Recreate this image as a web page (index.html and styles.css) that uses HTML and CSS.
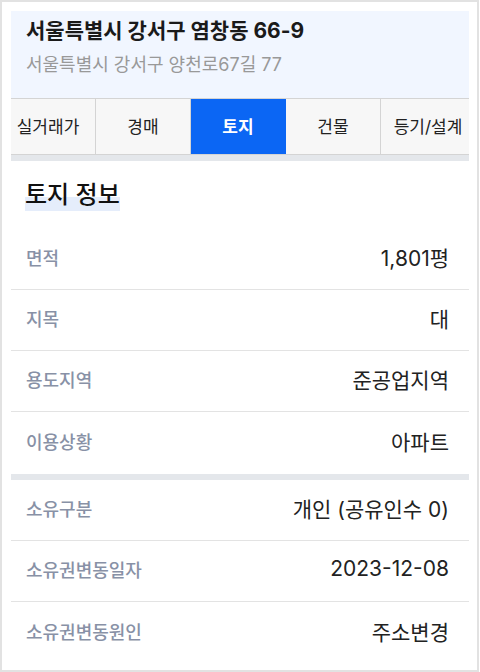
FILE: index.html
```html
<!DOCTYPE html>
<html lang="ko">
<head>
  <meta charset="UTF-8">
  <title>토지 정보</title>
  <link rel="stylesheet" href="styles.css">
</head>
<body>
  <div class="frame">
    <div class="card">
      <div class="header">
        <h1 class="address">서울특별시 강서구 염창동 66-9</h1>
        <p class="road-address">서울특별시 강서구 양천로67길 77</p>
      </div>

      <div class="tabs">
        <div class="tab-strip">
          <div class="tab">실거래가</div>
          <div class="tab">경매</div>
          <div class="tab active">토지</div>
          <div class="tab">건물</div>
          <div class="tab">등기/설계</div>
        </div>
      </div>

      <div class="divider"></div>

      <div class="section-head">
        <h2 class="section-title">토지 정보</h2>
      </div>

      <div class="row">
        <span class="label">면적</span>
        <span class="value">1,801평</span>
      </div>
      <div class="row">
        <span class="label">지목</span>
        <span class="value">대</span>
      </div>
      <div class="row">
        <span class="label">용도지역</span>
        <span class="value">준공업지역</span>
      </div>
      <div class="row last">
        <span class="label">이용상황</span>
        <span class="value">아파트</span>
      </div>

      <div class="divider"></div>

      <div class="row">
        <span class="label">소유구분</span>
        <span class="value">개인 (공유인수 0)</span>
      </div>
      <div class="row">
        <span class="label">소유권변동일자</span>
        <span class="value">2023-12-08</span>
      </div>
      <div class="row last">
        <span class="label">소유권변동원인</span>
        <span class="value">주소변경</span>
      </div>
    </div>
  </div>
</body>
</html>
```

FILE: styles.css
```css
* {
  box-sizing: border-box;
}
body {
  margin: 0;
  font-family: Inter, "Noto Sans CJK KR", sans-serif;
  color: #222;
  background-color: #fff;
}
.frame {
  width: 479px;
  height: 672px;
  border: 2px solid #e2e2e2;
  padding: 9px 7px 0 9px;
  overflow: hidden;
}
.card {
  width: 458px;
}
.header {
  background-color: #f1f6ff;
  height: 87px;
  padding: 7px 15px 0;
}
.address {
  margin: 0;
  font-size: 21px;
  font-weight: 700;
  line-height: 26px;
  color: #1a1a1a;
}
.road-address {
  margin: 8px 0 0;
  font-size: 18px;
  line-height: 26px;
  color: #999;
}
.tabs {
  overflow: hidden;
  border-top: 1px solid #d4d4d4;
  border-bottom: 1px solid #d4d4d4;
}
.tab-strip {
  display: flex;
  margin-left: -10px;
}
.tab {
  flex: 0 0 95px;
  height: 55px;
  display: flex;
  align-items: center;
  justify-content: center;
  padding-bottom: 2px;
  background-color: #f7f7f7;
  border-right: 1px solid #d4d4d4;
  font-size: 17px;
  color: #222;
}
.tab.active {
  background-color: #0b66f4;
  border-right-color: #0b66f4;
  color: #fff;
  font-weight: 700;
}
.divider {
  height: 6px;
  background-color: #e4e7eb;
}
.section-head {
  padding: 18px 14px 0;
  height: 68px;
}
.section-title {
  display: inline-block;
  margin: 0;
  font-size: 24px;
  font-weight: 500;
  line-height: 32px;
  color: #111;
  background: linear-gradient(transparent 55%, #e5edfb 55%);
}
.row {
  display: flex;
  justify-content: space-between;
  align-items: center;
  height: 61px;
  padding: 0 20px 5px 15px;
  border-bottom: 1px solid #e3e3e3;
}
.row.last {
  height: 62px;
  border-bottom: none;
}
.label {
  font-size: 18px;
  font-weight: 500;
  color: #8891a6;
}
.value {
  font-size: 21px;
  color: #222;
}
```
